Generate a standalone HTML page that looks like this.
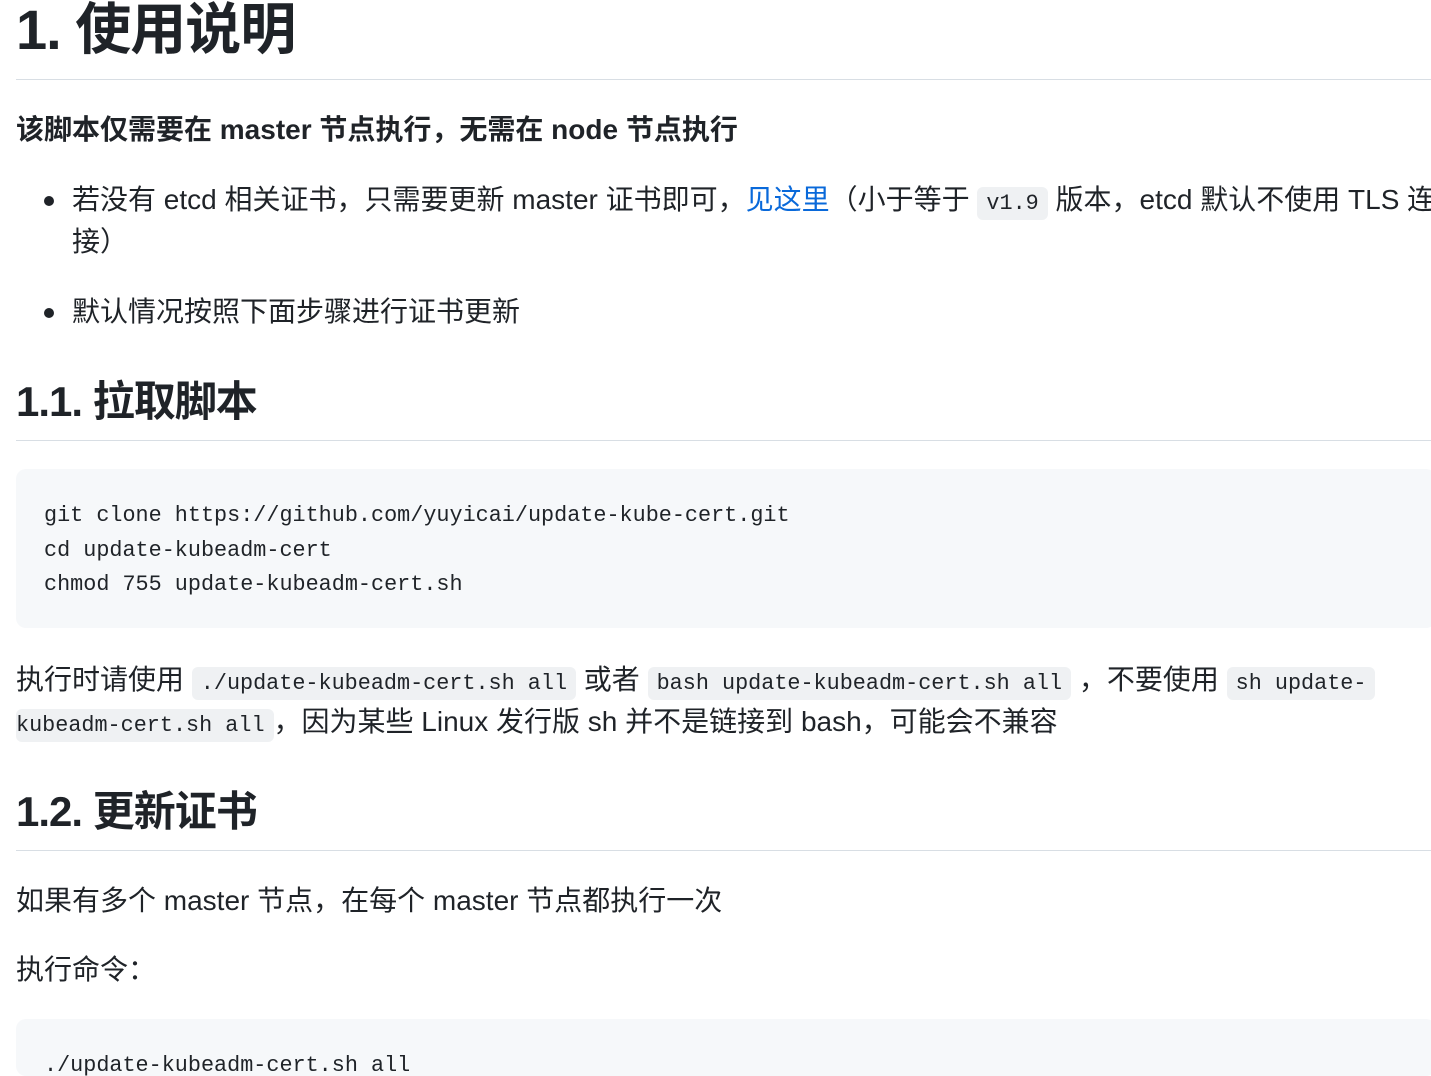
<!DOCTYPE html>
<html><head><meta charset="utf-8"><style>
*{margin:0;padding:0;box-sizing:border-box}
html,body{width:1431px;height:1076px;overflow:hidden;background:#fff;color:#1f2328}
body{font-family:"Liberation Sans","Noto Sans CJK SC",sans-serif;font-size:28px;position:relative}
.a{position:absolute;left:16px;white-space:nowrap}
.p{line-height:42px}
h1{font-size:56px;line-height:56px;font-weight:700;letter-spacing:-1px}
h2{font-size:42px;line-height:42px;font-weight:700;letter-spacing:-1px}
.hr{position:absolute;left:16px;width:1415px;height:1px;background:#d8dee4}
code,.pre{font-family:"Liberation Mono","Noto Sans CJK SC",monospace}
code{font-size:21.8px;background:#eff1f3;border-radius:6px;padding:4px 9px}
.pre{position:absolute;left:16px;width:1420px;background:#f6f8fa;border-radius:10px;padding:30px 28px 0;font-size:21.8px;line-height:34.5px;white-space:pre;overflow:hidden}
a{color:#0969da;text-decoration:none}
.dot{position:absolute;left:44px;width:10px;height:10px;border-radius:50%;background:#1f2328}
</style></head><body>
<h1 class="a" style="top:2px">1. 使用说明</h1>
<div class="hr" style="top:79px"></div>
<div class="a p" style="top:109px;font-weight:700">该脚本仅需要在 master 节点执行，无需在 node 节点执行</div>
<div class="dot" style="top:196px"></div>
<div class="a p" style="top:179px;left:72px">若没有 etcd 相关证书，只需要更新 master 证书即可，<a>见这里</a>（小于等于 <code>v1.9</code> 版本，etcd 默认不使用 TLS 连</div>
<div class="a p" style="top:221px;left:72px">接）</div>
<div class="dot" style="top:308px"></div>
<div class="a p" style="top:291px;left:72px">默认情况按照下面步骤进行证书更新</div>
<h2 class="a" style="top:381px">1.1. 拉取脚本</h2>
<div class="hr" style="top:440px"></div>
<div class="pre" style="top:469px;height:159px">git clone https://github.com/yuyicai/update-kube-cert.git
cd update-kubeadm-cert
chmod 755 update-kubeadm-cert.sh</div>
<div class="a p" style="top:659px">执行时请使用 <code>./update-kubeadm-cert.sh all</code> 或者 <code>bash update-kubeadm-cert.sh all</code> ，不要使用 <code>sh update-</code></div>
<div class="a p" style="top:701px"><code style="padding-left:0">kubeadm-cert.sh all</code>，因为某些 Linux 发行版 sh 并不是链接到 bash，可能会不兼容</div>
<h2 class="a" style="top:791px">1.2. 更新证书</h2>
<div class="hr" style="top:850px"></div>
<div class="a p" style="top:880px">如果有多个 master 节点，在每个 master 节点都执行一次</div>
<div class="a p" style="top:949px">执行命令：</div>
<div class="pre" style="top:1019px;height:57px">./update-kubeadm-cert.sh all</div>
</body></html>
